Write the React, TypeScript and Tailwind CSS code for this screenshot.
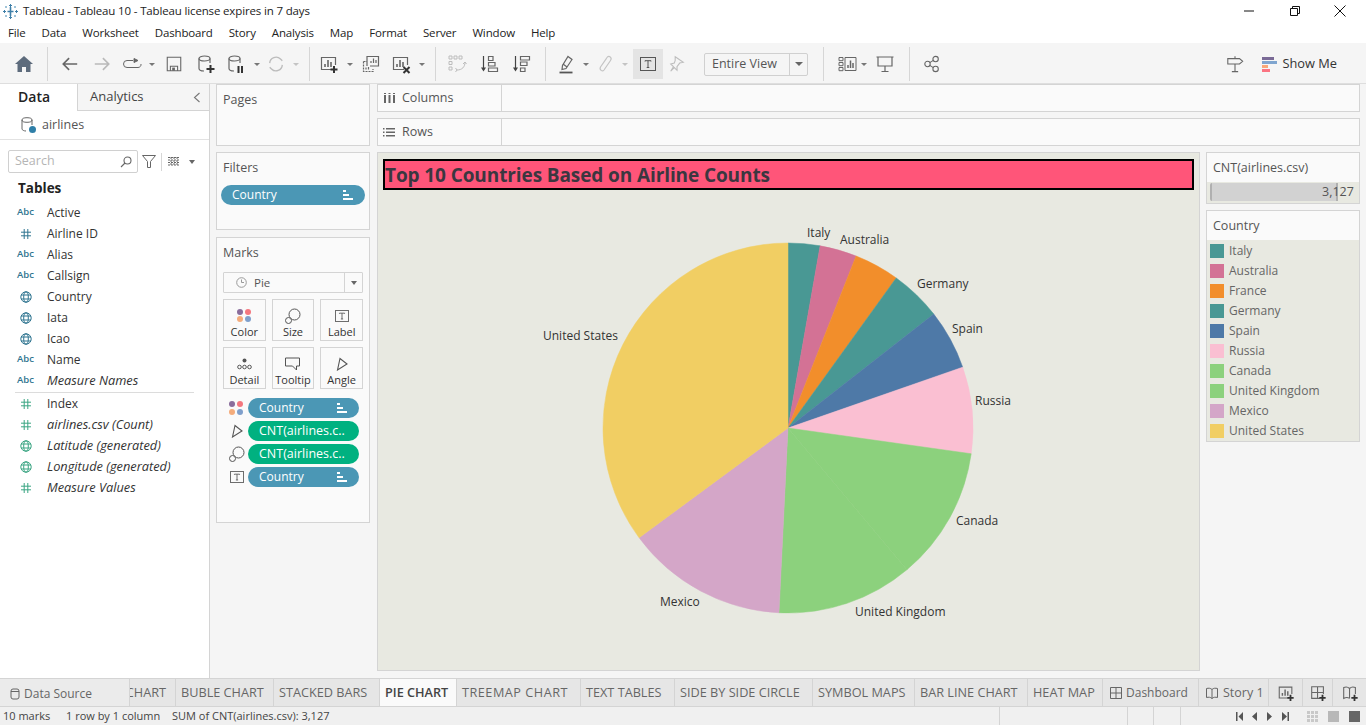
// Tableau worksheet window: menu, toolbar, data pane, shelves, pie view, legends, tabs and status bar.
import type { ReactNode } from "react";

const font = "font-['Open_Sans','Noto_Sans',sans-serif]";

function Svg({ size = 20, children, className = "" }: Readonly<{ size?: number; children: ReactNode; className?: string }>) {
  return (
    <svg width={size} height={size} viewBox="0 0 20 20" fill="none" stroke="currentColor" strokeWidth="1.2" className={className}>
      {children}
    </svg>
  );
}

function Slot({ className, children }: Readonly<{ className: string; children?: ReactNode }>) {
  return <span className={`flex h-full shrink-0 items-center justify-center text-[#666] ${className}`}>{children}</span>;
}

function Caret({ className = "w-[12px]", light = false }: Readonly<{ className?: string; light?: boolean }>) {
  return (
    <Slot className={className}>
      <span className={`h-0 w-0 border-x-[3px] border-t-[3px] border-x-transparent ${light ? "border-t-[#c4c4c4]" : "border-t-[#777]"}`} />
    </Slot>
  );
}

function Sep({ className = "" }: Readonly<{ className?: string }>) {
  return <span className={`h-[34px] w-px shrink-0 bg-[#d6d6d6] ${className}`} />;
}

function BarsIcon({ plus, cross, size = 20 }: Readonly<{ plus?: boolean; cross?: boolean; size?: number }>) {
  return (
    <Svg size={size}>
      <path d="M13 15.5H2.5v-12h14V11" />
      <path d="M6 13v-3M9 13V6M12 13V8" strokeWidth="1.6" />
      {plus && <path d="M15 12v7M11.5 15.5h7" stroke="#333" strokeWidth="2" />}
      {cross && <path d="M12.5 13l6 6M18.5 13l-6 6" stroke="#333" strokeWidth="2" />}
    </Svg>
  );
}

function CylinderIcon({ children, stroke = "#666" }: Readonly<{ children?: ReactNode; stroke?: string }>) {
  return (
    <Svg>
      <g stroke={stroke}>
        <ellipse cx="8.5" cy="4.5" rx="5.5" ry="2.5" />
        <path d="M3 4.5v10c0 1.5 2.5 2.5 5 2.5M14 4.5V9" />
      </g>
      {children}
    </Svg>
  );
}

function TextBoxIcon({ size = 16 }: Readonly<{ size?: number }>) {
  return (
    <svg width={size} height={size - 2} viewBox="0 0 16 14" fill="none" stroke="#555" strokeWidth="1">
      <rect x="0.5" y="0.5" width="15" height="13" />
      <path d="M5 4.5V3.7h6v.8M8 3.7v6.8M6.7 10.5h2.6" />
    </svg>
  );
}

function SizeIcon() {
  return (
    <svg width="16" height="16" viewBox="0 0 16 16" fill="none" stroke="#555" strokeWidth="1">
      <circle cx="9.5" cy="6.5" r="5.5" fill="#fafafa" />
      <circle cx="3.5" cy="12.5" r="3" fill="#fafafa" />
    </svg>
  );
}

function AngleIcon() {
  return (
    <svg width="12" height="14" viewBox="0 0 12 14" fill="none" stroke="#555" strokeWidth="1.1">
      <path d="M1.5 13L4 1.5l7 5.5z" />
    </svg>
  );
}

function ColorDots() {
  return (
    <span className="grid h-[14px] w-[15px] grid-cols-2 gap-[1px]">
      <span className="h-[6px] w-[6px] rounded-full bg-[#8a6d9c]" />
      <span className="h-[6px] w-[6px] rounded-full bg-[#f4777f]" />
      <span className="h-[6px] w-[6px] rounded-full bg-[#f4ac7c]" />
      <span className="h-[6px] w-[6px] rounded-full bg-[#7f9fcb]" />
    </span>
  );
}

function SortMark() {
  return (
    <svg width="10" height="10" viewBox="0 0 10 10" fill="#fff" className="shrink-0">
      <rect x="0" y="0" width="3" height="2" />
      <rect x="0" y="4" width="6" height="2" />
      <rect x="0" y="8" width="10" height="2" />
    </svg>
  );
}

function Toolbar() {
  return (
    <div className="flex h-[41px] shrink-0 items-center border-b border-[#dedede] bg-[#f5f5f5] pt-[2px]">
      <Slot className="w-[47px]">
        <svg width="18" height="16" viewBox="0 0 18 16" fill="#5d6b7c">
          <path d="M9 0L0 8h2.5v8h4.5v-5h4v5h4.500V8H18z" />
        </svg>
      </Slot>
      <Sep />
      <Slot className="ml-[6px] w-[32px] text-[#6b6b6b]">
        <Svg size={18}><path d="M18 10H2.500M9 3.500L2.500 10 9 16.500" strokeWidth="1.800" /></Svg>
      </Slot>
      <Slot className="w-[32px] text-[#b9b9b9]">
        <Svg size={18}><path d="M2 10h15.500M11 3.500l6.500 6.500-6.500 6.500" strokeWidth="1.800" /></Svg>
      </Slot>
      <Slot className="w-[28px]">
        <svg width="19" height="12" viewBox="0 0 19 12" fill="none" stroke="#666">
          <path d="M10 2.500H4a3 3 0 000 7h11a3 3 0 003-3.500" />
          <path d="M11 0.500l4 2-4 2z" fill="#666" />
        </svg>
      </Slot>
      <Caret />
      <Slot className="w-[32px]">
        <Svg size={18}>
          <path d="M2.500 2.500h15v15h-15zM6 17.500v-5h8v5" />
          <rect x="8" y="14" width="3" height="3.500" fill="#666" stroke="none" />
        </Svg>
      </Slot>
      <Slot className="w-[32px]">
        <CylinderIcon><path d="M14.500 11v8M10.500 15h8" stroke="#333" strokeWidth="2" /></CylinderIcon>
      </Slot>
      <Slot className="w-[28px]">
        <CylinderIcon><path d="M12.500 12v7M16 12v7" stroke="#333" strokeWidth="2" /></CylinderIcon>
      </Slot>
      <Caret className="w-[13px]" />
      <Slot className="w-[26px] text-[#bcbcbc]">
        <Svg size={18}>
          <path d="M3 9a7 7 0 0112-4.500l2 2M17 11a7 7 0 01-12 4.500l-2-2" strokeWidth="1.5" />
        </Svg>
      </Slot>
      <Caret className="w-[14px]" light />
      <Sep className="ml-[6px]" />
      <Slot className="ml-[4px] w-[30px]"><BarsIcon plus /></Slot>
      <Caret />
      <Slot className="w-[30px]">
        <Svg>
          <path d="M6 12V2.500h11.500V12H9" />
          <path d="M10 9V7M12.500 9V4.500M15 9V6" />
          <path d="M2.500 7.500H6M2.500 7.500v10H12V15" strokeDasharray="2 1" />
          <path d="M5 15.500v-2M7.500 15.500V13" />
        </Svg>
      </Slot>
      <Slot className="w-[30px]"><BarsIcon cross /></Slot>
      <Caret />
      <Sep className="ml-[7px]" />
      <Slot className="ml-[6px] w-[30px] text-[#bcbcbc]">
        <Svg>
          <path d="M2 2h3v3H2zM7 2h3v3H7zM12 2h3v3h-3zM2 7.500h3v3H2zM2 13h3v3H2z" strokeWidth="1" />
          <path d="M18 8c0 5-3 8-8 8M8.500 14l1.500 2-1.500 2M16 10l2-2 1.500 2" strokeWidth="1" />
        </Svg>
      </Slot>
      <Slot className="w-[34px]">
        <Svg>
          <path d="M4.500 2v14" stroke="#444" />
          <path d="M2 13.500l2.500 4 2.500-4z" fill="#444" stroke="none" />
          <path d="M9.500 2.500h4.500v4H9.500zM9.500 8.500h6.500v3.500H9.500zM9.500 14h9v3.500h-9z" />
        </Svg>
      </Slot>
      <Slot className="w-[30px]">
        <Svg>
          <path d="M4.500 2v14" stroke="#444" />
          <path d="M2 13.500l2.500 4 2.500-4z" fill="#444" stroke="none" />
          <path d="M9.500 2.500h9V6h-9zM9.500 8h6.500v3.500H9.500zM9.500 14h4.500v3.500H9.500z" />
        </Svg>
      </Slot>
      <Sep className="ml-[9px]" />
      <Slot className="ml-[8px] w-[26px]">
        <Svg>
          <path d="M11 2.500l4 3-6 9-4 1 .5-4z" />
          <path d="M6 10l4 3" />
          <path d="M2.500 18.500h13" stroke="#555" strokeWidth="1.800" />
        </Svg>
      </Slot>
      <Caret className="w-[11px]" />
      <Slot className="w-[28px] text-[#c4c4c4]">
        <Svg><path d="M5.500 13L12 3.500c2-2.500 5.500 0 3.500 3L9 16c-1.500 2-5 0-3.500-3l6-8.500" /></Svg>
      </Slot>
      <Caret light />
      <span className="ml-[2px] flex h-[30px] w-[30px] shrink-0 items-center justify-center bg-[#e4e4e4]">
        <TextBoxIcon />
      </span>
      <Slot className="w-[28px] text-[#bdbdbd]">
        <Svg size={18}><path d="M8 2l9 6-4 1-3 4 0 4-3-3-4 4 3-5-3-3 4-1 1-3z" /></Svg>
      </Slot>
      <div className="ml-[13px] flex h-[23px] w-[104px] shrink-0 items-center rounded-[2px] border border-[#d0d0d0] text-[12.5px] text-[#555]">
        <span className="flex-1 pl-[7px]">Entire View</span>
        <span className="flex h-full w-[18px] items-center justify-center border-l border-[#d0d0d0]">
          <span className="h-0 w-0 border-x-[4px] border-t-[4px] border-x-transparent border-t-[#666]" />
        </span>
      </div>
      <Sep className="ml-[15px]" />
      <Slot className="ml-[10px] w-[26px]">
        <Svg>
          <path d="M2 3.500h4v3.200H2zM2 8.500h4v3.200H2zM2 13.500h4v3.200H2zM8 3.500h11v13H8z" strokeWidth="1" />
          <path d="M11 14v-3M13.500 14V6.500M16 14V9" strokeWidth="1.500" />
        </Svg>
      </Slot>
      <Caret className="w-[8px]" />
      <Slot className="w-[34px]">
        <Svg>
          <path d="M1.500 3h17M3 3v9h14V3M10 12v5M6.500 17.500h7" />
        </Svg>
      </Slot>
      <Sep className="ml-[7px]" />
      <Slot className="ml-[8px] w-[28px]">
        <Svg size={18}>
          <circle cx="5" cy="10" r="3" />
          <circle cx="14" cy="4.500" r="3" />
          <circle cx="14" cy="15.500" r="3" />
          <path d="M7.500 8.500L11.500 6M7.500 11.500l4 2.500" />
        </Svg>
      </Slot>
      <div className="flex-1" />
      <Slot className="w-[32px]">
        <Svg size={18}><path d="M2 4h13l3.500 3-3.500 3H2zM10 10v8M6.500 18.500h7M10 1.500V4" /></Svg>
      </Slot>
      <span className="ml-[11px] flex w-[16px] shrink-0 flex-col gap-[1px]">
        <span className="h-[3px] w-[12px] bg-[#7a6a96]" />
        <span className="h-[3px] w-[15px] bg-[#7fa5cf]" />
        <span className="h-[3px] w-[6px] bg-[#f8a77a]" />
        <span className="h-[3px] w-[8px] bg-[#fb7482]" />
      </span>
      <span className="ml-[5px] mr-[29px] text-[12.800px] text-[#333]">Show Me</span>
    </div>
  );
}

type FieldKind = "abc" | "num" | "geo";
type Field = { name: string; kind: FieldKind; italic?: boolean };

const dimensions: Field[] = [
  { name: "Active", kind: "abc" },
  { name: "Airline ID", kind: "num" },
  { name: "Alias", kind: "abc" },
  { name: "Callsign", kind: "abc" },
  { name: "Country", kind: "geo" },
  { name: "Iata", kind: "geo" },
  { name: "Icao", kind: "geo" },
  { name: "Name", kind: "abc" },
  { name: "Measure Names", kind: "abc", italic: true },
];

const measures: Field[] = [
  { name: "Index", kind: "num" },
  { name: "airlines.csv (Count)", kind: "num", italic: true },
  { name: "Latitude (generated)", kind: "geo", italic: true },
  { name: "Longitude (generated)", kind: "geo", italic: true },
  { name: "Measure Values", kind: "num", italic: true },
];

function FieldIcon({ kind, color }: Readonly<{ kind: FieldKind; color: string }>) {
  if (kind === "abc") return <span className="text-[9.5px] font-semibold" style={{ color }}>Abc</span>;
  if (kind === "num") {
    return (
      <svg width="10" height="10" viewBox="0 0 10 10" stroke={color} strokeWidth="1">
        <path d="M3.200 0v10M6.800 0v10M0 3.200h10M0 6.800h10" />
      </svg>
    );
  }
  return (
    <svg width="12" height="12" viewBox="0 0 12 12" fill="none" stroke={color} strokeWidth="1">
      <circle cx="6" cy="6" r="5.200" />
      <ellipse cx="6" cy="6" rx="2.300" ry="5.200" />
      <path d="M1 4h10M1 8h10" />
    </svg>
  );
}

function FieldRow({ field, color }: Readonly<{ field: Field; color: string }>) {
  return (
    <li className="flex h-[21px] items-center">
      <span className="flex w-[47px] shrink-0 justify-center pl-[11px] pr-[7px]">
        <FieldIcon kind={field.kind} color={color} />
      </span>
      <span className={`text-[#333] ${field.italic ? "text-[12.800px] italic" : "text-[12px]"}`}>{field.name}</span>
    </li>
  );
}

function DataPane() {
  return (
    <aside className="flex w-[210px] shrink-0 flex-col border-r border-[#d4d4d4] bg-white">
      <div className="flex h-[27px] shrink-0">
        <div className="w-[77px] pl-[18px] text-[14px] leading-[26px] font-semibold text-[#222]">Data</div>
        <div className="flex flex-1 items-center justify-between border-b border-l border-[#d4d4d4] bg-[#f5f5f5] pl-[12px] pr-[8px] text-[13px] text-[#444]">
          <span>Analytics</span>
          <svg width="8" height="11" viewBox="0 0 8 11" fill="none" stroke="#777" strokeWidth="1.1"><path d="M6.500 1L1.500 5.500l5 4.500" /></svg>
        </div>
      </div>
      <div className="flex h-[29px] shrink-0 items-center border-b border-[#e2e2e2] pl-[21px] text-[12.5px] text-[#555]">
        <span className="relative mr-[6px] flex h-[16px] w-[15px]">
          <svg width="13" height="15" viewBox="0 0 13 15" fill="none" stroke="#666"><ellipse cx="6" cy="3" rx="5" ry="2.300" /><path d="M1 3v9c0 1 2 2 4 2M11 3v5" /></svg>
          <span className="absolute right-0 bottom-0 h-[7px] w-[7px] rounded-full bg-[#2f7fa8]" />
        </span>
        airlines
      </div>
      <div className="mt-[10px] flex h-[23px] shrink-0 items-center pl-[8px]">
        <div className="flex h-[23px] w-[130px] items-center justify-between rounded-[2px] border border-[#d0d0d0] pl-[6px] pr-[5px] text-[12.5px] text-[#b5b5b5]">
          Search
          <svg width="12" height="12" viewBox="0 0 12 12" fill="none" stroke="#666" strokeWidth="1.100"><circle cx="7.500" cy="4.500" r="3.500" /><path d="M5 7L1 11" /></svg>
        </div>
        <svg width="14" height="13" viewBox="0 0 14 13" fill="none" stroke="#666" className="ml-[4px]"><path d="M.5.500h13L8.500 6.500V12.500h-3V6.500z" /></svg>
        <span className="ml-[5px] h-[18px] w-px bg-[#d6d6d6]" />
        <svg width="12" height="9" viewBox="0 0 12 9" stroke="#666" strokeWidth="1" className="ml-[6px]"><path d="M0 .500h12M0 3h12M0 5.500h12M0 8h12M3 0v9M6 0v9M9 0v9" strokeDasharray="2 1" /></svg>
        <span className="ml-[9px] h-0 w-0 border-x-[3.500px] border-t-[4px] border-x-transparent border-t-[#666]" />
      </div>
      <div className="mt-[5px] pl-[18px] text-[13.5px] leading-[20px] font-bold text-[#222]">Tables</div>
      <ul className="mt-[4px]">
        {dimensions.map((f) => <FieldRow key={f.name} field={f} color="#2f7590" />)}
      </ul>
      <div className="mx-[15px] mt-[1px] border-t border-[#dcdcdc]" />
      <ul>
        {measures.map((f) => <FieldRow key={f.name} field={f} color="#3ba583" />)}
      </ul>
    </aside>
  );
}

function Card({ title, className, children }: Readonly<{ title: string; className: string; children?: ReactNode }>) {
  return (
    <section className={`shrink-0 border border-[#d4d4d4] bg-[#fafafa] ${className}`}>
      <h3 className="pl-[6px] pt-[6px] text-[12.5px] leading-[18px] font-normal text-[#555]">{title}</h3>
      {children}
    </section>
  );
}

function Pill({ label, tone, sort, className = "" }: Readonly<{ label: string; tone: "blue" | "green"; sort?: boolean; className?: string }>) {
  return (
    <div className={`flex h-[20px] items-center justify-between rounded-full pl-[11px] pr-[12px] text-white ${tone === "blue" ? "bg-[#4b97b5] text-[12px]" : "bg-[#00b180] text-[12.5px]"} ${className}`}>
      <span>{label}</span>
      {sort && <SortMark />}
    </div>
  );
}

function MarkButton({ label, icon }: Readonly<{ label: string; icon: ReactNode }>) {
  return (
    <div className="flex h-[42px] flex-col items-center border border-[#d4d4d4] pt-[6px] text-[11px] leading-[14px] text-[#333]">
      <span className="flex h-[19px] items-center">{icon}</span>
      <span>{label}</span>
    </div>
  );
}

function MarksRow({ icon, children }: Readonly<{ icon: ReactNode; children: ReactNode }>) {
  return (
    <div className="flex h-[20px] items-center">
      <span className="flex w-[31px] shrink-0 justify-center pl-[11px] pr-[3px]">{icon}</span>
      {children}
    </div>
  );
}

function MiddleColumn() {
  return (
    <div className="ml-[6px] flex w-[154px] shrink-0 flex-col">
      <Card title="Pages" className="h-[62px]" />
      <Card title="Filters" className="mt-[6px] h-[78px]">
        <Pill label="Country" tone="blue" sort className="mx-[4px] mt-[8px]" />
      </Card>
      <Card title="Marks" className="mt-[7px] h-[286px]">
        <div className="mx-[6px] mt-[10px] flex h-[21px] items-center rounded-[1px] border border-[#d4d4d4] text-[11.5px] text-[#555]">
          <span className="ml-[12px] flex items-center gap-[7px]">
            <svg width="11" height="11" viewBox="0 0 11 11" fill="none" stroke="#999"><circle cx="5.500" cy="5.500" r="4.800" /><path d="M5.500 2.500v3h2.500" /></svg>
            Pie
          </span>
          <span className="ml-auto flex h-full w-[18px] items-center justify-center border-l border-[#d4d4d4]">
            <span className="h-0 w-0 border-x-[3.500px] border-t-[4px] border-x-transparent border-t-[#666]" />
          </span>
        </div>
        <div className="mx-[6px] mt-[6px] grid grid-cols-3 gap-[6px]">
          <MarkButton label="Color" icon={<ColorDots />} />
          <MarkButton label="Size" icon={<SizeIcon />} />
          <MarkButton label="Label" icon={<TextBoxIcon size={14} />} />
          <MarkButton
            label="Detail"
            icon={
              <svg width="15" height="12" viewBox="0 0 15 12" fill="none" stroke="#555">
                <circle cx="7.500" cy="2.500" r="2" fill="#555" stroke="none" />
                <circle cx="2.500" cy="9" r="1.800" />
                <circle cx="7.500" cy="9" r="1.800" />
                <circle cx="12.500" cy="9" r="1.800" />
              </svg>
            }
          />
          <MarkButton
            label="Tooltip"
            icon={<svg width="15" height="14" viewBox="0 0 15 14" fill="none" stroke="#555"><path d="M.500 1h14v8h-3v4l-4-4H.500z" /></svg>}
          />
          <MarkButton label="Angle" icon={<AngleIcon />} />
        </div>
        <div className="mt-[9px] flex flex-col gap-[3px] pr-[10px]">
          <MarksRow icon={<ColorDots />}><Pill label="Country" tone="blue" sort className="flex-1" /></MarksRow>
          <MarksRow icon={<AngleIcon />}><Pill label="CNT(airlines.c.." tone="green" className="flex-1" /></MarksRow>
          <MarksRow icon={<SizeIcon />}><Pill label="CNT(airlines.c.." tone="green" className="flex-1" /></MarksRow>
          <MarksRow icon={<TextBoxIcon size={14} />}><Pill label="Country" tone="blue" sort className="flex-1" /></MarksRow>
        </div>
      </Card>
    </div>
  );
}

function Shelf({ label, icon, className = "" }: Readonly<{ label: string; icon: ReactNode; className?: string }>) {
  return (
    <div className={`flex h-[28px] shrink-0 border border-[#d4d4d4] bg-[#fafafa] ${className}`}>
      <div className="flex w-[124px] items-center border-r border-[#d4d4d4] pl-[5px] text-[12.5px] text-[#555]">
        <span className="mr-[7px] flex w-[12px] justify-center">{icon}</span>
        {label}
      </div>
    </div>
  );
}

type Slice = { name: string; color: string; from: number; to: number; lx: number; ly: number };

// angles in degrees clockwise from twelve o'clock; lx/ly are label anchors inside the svg
const slices: Slice[] = [
  { name: "Italy", color: "#499894", from: 0, to: 10, lx: 429, ly: 47 },
  { name: "Australia", color: "#d37295", from: 10, to: 21.6, lx: 462, ly: 54 },
  { name: "France", color: "#f28e2b", from: 21.6, to: 35.8, lx: 0, ly: 0 },
  { name: "Germany", color: "#499894", from: 35.8, to: 52, lx: 539, ly: 98 },
  { name: "Spain", color: "#4e79a7", from: 52, to: 70.8, lx: 574, ly: 143 },
  { name: "Russia", color: "#fabfd2", from: 70.8, to: 98, lx: 597, ly: 215 },
  { name: "Canada", color: "#8cd17d", from: 98, to: 140, lx: 578, ly: 335 },
  { name: "United Kingdom", color: "#8cd17d", from: 140, to: 182.8, lx: 477, ly: 426 },
  { name: "Mexico", color: "#d4a6c8", from: 182.8, to: 233.6, lx: 282, ly: 416 },
  { name: "United States", color: "#f1ce63", from: 233.6, to: 360, lx: 165, ly: 150 },
];

const cx = 410;
const cy = 238;
const radius = 185;

function point(deg: number): string {
  const rad = (deg * Math.PI) / 180;
  return `${(cx + radius * Math.sin(rad)).toFixed(2)} ${(cy - radius * Math.cos(rad)).toFixed(2)}`;
}

function PieChart() {
  return (
    <svg viewBox="0 0 821 480" className="h-[480px] w-[821px]">
      {slices.map((s) => (
        <path
          key={s.name}
          d={`M${cx} ${cy}L${point(s.from)}A${radius} ${radius} 0 ${s.to - s.from > 180 ? 1 : 0} 1 ${point(s.to)}Z`}
          fill={s.color}
          stroke={s.color}
          strokeWidth="0.5"
        />
      ))}
      {slices.filter((s) => s.lx > 0).map((s) => (
        <text key={s.name} x={s.lx} y={s.ly} fontSize="12" fill="#333">{s.name}</text>
      ))}
    </svg>
  );
}

function Legends() {
  return (
    <div className="flex w-[154px] shrink-0 flex-col">
      <div className="h-[52px] border border-[#d4d4d4] bg-[#fafafa]">
        <div className="h-[29px] pl-[6px] pt-[6px] text-[12.5px] leading-[18px] text-[#555]">CNT(airlines.csv)</div>
        <div className="flex h-[21px] bg-[#e8e9e1] pl-[3px] pt-[1px]">
          <div className="h-[18px] w-[128px] shrink-0 rounded-l-[2px] border-x-2 border-x-[#b0b0b0] bg-[#d2d2d2]" />
          <span className="-ml-[16px] text-[12.5px] leading-[18px] text-[#555]">3,127</span>
        </div>
      </div>
      <div className="mt-[6px] h-[232px] border border-[#d4d4d4] bg-[#e8e9e1]">
        <div className="h-[29px] bg-[#fafafa] pl-[6px] pt-[6px] text-[12.5px] leading-[18px] text-[#555]">Country</div>
        <ul className="pt-[1px]">
          {slices.map((s) => (
            <li key={s.name} className="flex h-[20px] items-center pl-[3px] text-[12px] text-[#666]">
              <span className="mr-[5px] h-[14px] w-[14px] shrink-0" style={{ backgroundColor: s.color }} />
              {s.name}
            </li>
          ))}
        </ul>
      </div>
    </div>
  );
}

function Worksheet() {
  return (
    <div className="ml-[7px] flex w-[983px] shrink-0 flex-col">
      <Shelf
        label="Columns"
        icon={<svg width="11" height="10" viewBox="0 0 11 10" fill="#666"><path d="M0 2h2v8H0zM4.500 2h2v8h-2zM9 2h2v8H9zM0 0h2v1H0zM4.500 0h2v1h-2zM9 0h2v1H9z" /></svg>}
      />
      <Shelf
        label="Rows"
        className="mt-[6px]"
        icon={<svg width="12" height="9" viewBox="0 0 12 9" fill="#666"><path d="M3 0h9v1.500H3zM3 3.500h9V5H3zM3 7h9v1.500H3zM0 0h1.500v1.500H0zM0 3.500h1.500V5H0zM0 7h1.500v1.500H0z" /></svg>}
      />
      <div className="mt-[6px] flex gap-[6px]">
        <div className="h-[519px] w-[823px] shrink-0 border border-[#d4d4d4] bg-[#e8e9e1]">
          <div className="px-[5px] pt-[6px]">
            <div className="flex h-[31px] items-center border-2 border-black bg-[#ff5579] pt-[2px] text-[19px] font-bold tracking-[-0.1px] text-[#3b3740]">
              Top 10 Countries Based on Airline Counts
            </div>
          </div>
          <PieChart />
        </div>
        <Legends />
      </div>
    </div>
  );
}

const tabs = [
  { name: "BUBLE CHART", w: "w-[98px]", extra: "" },
  { name: "STACKED BARS", w: "w-[106px]", extra: "" },
  { name: "PIE CHART", w: "w-[77px]", extra: "bg-[#fafafa] font-semibold text-[#444]" },
  { name: "TREEMAP CHART", w: "w-[124px]", extra: "tracking-[0.5px]" },
  { name: "TEXT TABLES", w: "w-[94px]", extra: "" },
  { name: "SIDE BY SIDE CIRCLE", w: "w-[138px]", extra: "" },
  { name: "SYMBOL MAPS", w: "w-[102px]", extra: "" },
  { name: "BAR LINE CHART", w: "w-[113px]", extra: "" },
  { name: "HEAT MAP", w: "w-[75px]", extra: "" },
];

function TabBar() {
  return (
    <div className="flex h-[29px] shrink-0 border-y border-[#d4d4d4] bg-[#e6e6e6] text-[12.700px] text-[#666]">
      <div className="flex w-[130px] shrink-0 items-center border-r border-[#d4d4d4] bg-[#ebebeb] pl-[10px] pt-[2px] text-[12px]">
        <svg width="10" height="12" viewBox="0 0 10 12" fill="none" stroke="#666" className="mr-[4px]"><rect x="1" y="1" width="8" height="10" rx="2" /><path d="M1 3.500h8" /></svg>
        Data Source
      </div>
      <div className="flex w-[46px] shrink-0 items-center justify-end overflow-hidden border-r border-[#d4d4d4] pr-[9px] pt-[1px]">CHART</div>
      {tabs.map((t) => (
        <div key={t.name} className={`flex shrink-0 items-center border-r border-[#d4d4d4] pl-[5px] pt-[1px] whitespace-nowrap ${t.w} ${t.extra}`}>
          {t.name}
        </div>
      ))}
      <div className="flex w-[96px] shrink-0 items-center border-r border-[#d4d4d4] pl-[7px] pt-[1px] text-[12px]">
        <svg width="12" height="12" viewBox="0 0 12 12" fill="none" stroke="#666" className="mr-[4px]"><path d="M.5.500h11v11H.500zM6 .500v11M.500 6h11" /></svg>
        Dashboard
      </div>
      <div className="flex w-[70px] shrink-0 items-center border-r border-[#d4d4d4] pl-[7px] pt-[1px] text-[12.500px]">
        <svg width="12" height="12" viewBox="0 0 12 12" fill="none" stroke="#666" className="mr-[5px]"><path d="M6 2.500C4.500 1 2.500 1 .500 1.500v9c2-.500 4-.500 5.500 1 1.500-1.500 3.500-1.500 5.500-1v-9C9.500 1 7.500 1 6 2.500zM6 2.500v9" /></svg>
        Story 1
      </div>
      <div className="flex w-[34px] shrink-0 items-center justify-center border-r border-[#d4d4d4]"><BarsIcon plus size={18} /></div>
      <div className="flex w-[30px] shrink-0 items-center justify-center border-r border-[#d4d4d4]">
        <Svg size={18}><path d="M12 16H3V3h13v8M9.500 3v13M3 9.500h13" /><path d="M15 12v7M11.500 15.500h7" stroke="#333" strokeWidth="2" /></Svg>
      </div>
      <div className="flex w-[33px] shrink-0 items-center justify-center">
        <Svg size={18}><path d="M9.500 5C8 3.500 5 3 3 4v12c2-1 5-1 6.500 0M9.500 5C11 3.500 14 3 16 4v7M9.500 5v11" /><path d="M15 12v7M11.500 15.500h7" stroke="#333" strokeWidth="2" /></Svg>
      </div>
    </div>
  );
}

function StatusBar() {
  return (
    <div className="flex h-[18px] shrink-0 items-center bg-[#f0f0f0] pl-[3px] text-[11px] text-[#444]">
      <span className="w-[63px]">10 marks</span>
      <span className="w-[106px]">1 row by 1 column</span>
      <span className="w-[827px]">SUM of CNT(airlines.csv): 3,127</span>
      <span className="h-full w-[128px] border-l border-[#d4d4d4]" />
      <span className="h-full w-[26px] border-l border-[#d4d4d4]" />
      <span className="h-full w-[27px] border-l border-[#d4d4d4]" />
      <span className="flex h-full w-[118px] items-center border-l border-[#d4d4d4] pl-[55px]">
        <svg width="60" height="9" viewBox="0 0 60 9" fill="#555" className="shrink-0">
          <path d="M0 0h1.500v9H0zM7 0v9L2.500 4.500zM21 0v9l-5-4.500zM31 0v9l5-4.500zM46 0v9l5-4.500zM51.500 0H53v9h-1.500z" />
        </svg>
      </span>
      <span className="ml-auto mr-[6px] flex items-center gap-[10px]">
        <span className="grid h-[11px] w-[11px] grid-cols-3 gap-[1px]">
          {[0, 1, 2, 3, 4, 5, 6, 7, 8].map((i) => <span key={i} className="bg-[#c8c8c8]" />)}
        </span>
        <span className="h-[11px] w-[11px] bg-[#b8b8b8]" />
        <span className="h-[11px] w-[11px] bg-[#666]" />
      </span>
    </div>
  );
}

const menu = ["File", "Data", "Worksheet", "Dashboard", "Story", "Analysis", "Map", "Format", "Server", "Window", "Help"];

export default function App() {
  return (
    <div className={`flex h-[725px] w-[1366px] flex-col overflow-hidden bg-[#f5f5f5] ${font}`}>
      <div className="flex h-[22px] shrink-0 items-center bg-white pl-[3px] text-[11.500px] tracking-[-0.15px] text-[#222]">
        <svg width="15" height="15" viewBox="0 0 15 15" fill="none" stroke="#3f7fa8" strokeWidth="1" className="mr-[5px]">
          <path d="M7.500 3v9M4.500 7.500h6" strokeWidth="1.600" />
          <path d="M7.500 0v3M6 1.500h3M7.500 12v3M6 13.500h3M0 7.500h3M1.500 6v3M12 7.500h3M13.500 6v3" />
          <path d="M3 2v2M2 3h2M12 2v2M11 3h2M3 11v2M2 12h2M12 11v2M11 12h2" stroke="#7fb0cc" />
        </svg>
        Tableau - Tableau 10 - Tableau license expires in 7 days
        <span className="ml-auto flex w-[127px] items-center text-[#111]">
          <svg width="12" height="12" viewBox="0 0 12 12" stroke="currentColor" className="ml-[4px]"><path d="M1 6h10" /></svg>
          <svg width="12" height="12" viewBox="0 0 12 12" fill="none" stroke="currentColor" className="ml-[34px]"><path d="M1.500 3.500h7v7h-7zM3.500 3.500v-2h7v7h-2" /></svg>
          <svg width="12" height="12" viewBox="0 0 12 12" stroke="currentColor" className="ml-[33px]"><path d="M.5.500l11 11M11.500.500l-11 11" /></svg>
        </span>
      </div>
      <nav className="flex h-[21px] shrink-0 items-center gap-[16px] bg-white pl-[8px] text-[11.500px] tracking-[-0.15px] text-[#222]">
        {menu.map((m) => <span key={m}>{m}</span>)}
      </nav>
      <Toolbar />
      <main className="flex min-h-0 flex-1">
        <DataPane />
        <MiddleColumn />
        <Worksheet />
      </main>
      <TabBar />
      <StatusBar />
    </div>
  );
}
